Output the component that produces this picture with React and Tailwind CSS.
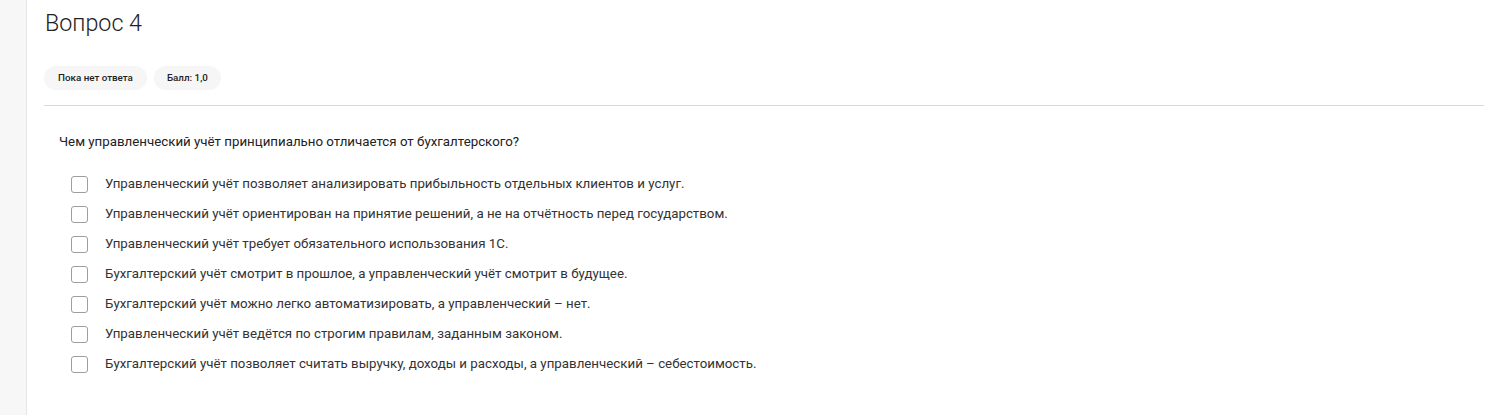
export default function App() {
  const options = [
    "Управленческий учёт позволяет анализировать прибыльность отдельных клиентов и услуг.",
    "Управленческий учёт ориентирован на принятие решений, а не на отчётность перед государством.",
    "Управленческий учёт требует обязательного использования 1С.",
    "Бухгалтерский учёт смотрит в прошлое, а управленческий учёт смотрит в будущее.",
    "Бухгалтерский учёт можно легко автоматизировать, а управленческий – нет.",
    "Управленческий учёт ведётся по строгим правилам, заданным законом.",
    "Бухгалтерский учёт позволяет считать выручку, доходы и расходы, а управленческий – себестоимость.",
  ];
  return (
    <div className="flex h-[415px] w-[1500px] bg-[#f7f7f7] font-['Roboto',sans-serif] text-[#212121]">
      <div className="w-[26px] shrink-0" />
      <div className="flex-1 border-l border-[#e6e6e6] bg-white pl-[17px] pr-[16px]">
        <h1 className="pt-[6px] pl-px text-[23.3px] font-light leading-[34px] text-[#222]">Вопрос 4</h1>
        <div className="mt-[26px] flex gap-[7px]">
          <span className="flex h-[24px] items-center rounded-[12px] bg-[#f6f6f6] px-[14px] text-[9.8px] font-medium text-[#222]">Пока нет ответа</span>
          <span className="flex h-[24px] items-center rounded-[12px] bg-[#f6f6f6] px-[13px] text-[9.8px] font-medium text-[#222]">Балл: 1,0</span>
        </div>
        <div className="mt-[15px] h-px bg-[#d9d9d9]" />
        <div className="pl-[15px] pt-[26px] text-[13.3px] leading-[20px] text-[#222]">
          Чем управленческий учёт принципиально отличается от бухгалтерского?
        </div>
        <div className="mt-[22px] flex flex-col gap-[10px] pl-[27px]">
          {options.map((o, i) => (
            <label key={i} className="flex h-[20px] items-center">
              <span className="h-[17px] w-[17px] shrink-0 rounded-[3px] border border-[#9e9e9e] bg-white" />
              <span className="ml-[17px] text-[13.3px] text-[#333]">{o}</span>
            </label>
          ))}
        </div>
      </div>
    </div>
  );
}
